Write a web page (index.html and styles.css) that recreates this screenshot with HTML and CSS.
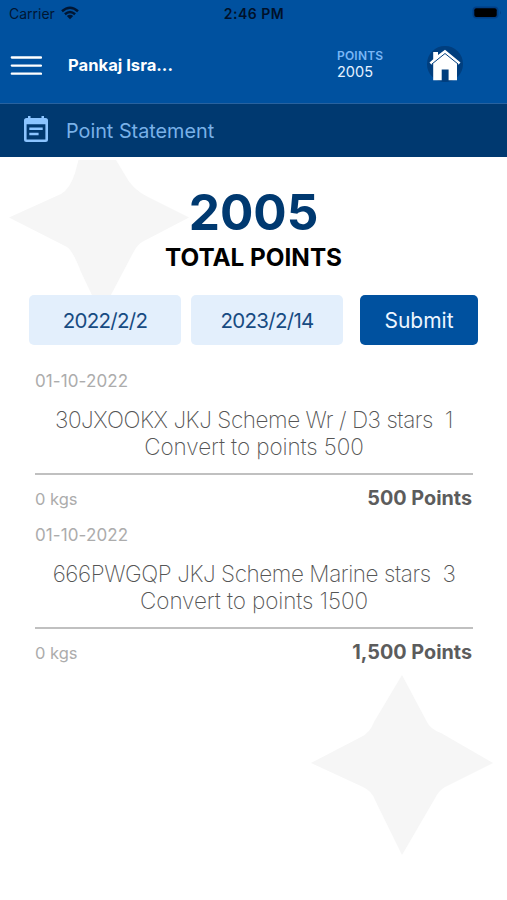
FILE: index.html
```html
<!DOCTYPE html>
<html lang="en">
<head>
<meta charset="utf-8">
<title>Point Statement</title>
<link rel="stylesheet" href="styles.css">
</head>
<body>
<div class="status-bar">
  <div class="carrier"><span>Carrier</span>
    <svg class="wifi" viewBox="0 0 18 14" width="18" height="14"><g fill="none" stroke="#001633" stroke-width="2.5"><path d="M1 5.2Q9-1.8 17 5.2"/><path d="M3.9 8.3Q9 3.8 14.1 8.3"/></g><path d="M5.8 10Q9 7.3 12.2 10L9 13.3Z" fill="#001633"/></svg>
  </div>
  <span class="clock">2:46 PM</span>
  <svg class="battery" viewBox="0 0 30 14" width="30" height="14"><rect x=".5" y=".5" width="26" height="12" rx="4" fill="#003f86"/><rect x="2.3" y="2.3" width="22.4" height="8.6" rx="2" fill="#000"/><path d="M28 4.5q1.6 2 0 4z" fill="#003f86"/></svg>
</div>
<header class="header">
  <svg class="menu" viewBox="0 0 32 20" width="32" height="20"><path d="M1.8 1.5H31M1.8 9.6H31M1.8 17.7H31" stroke="#fff" stroke-width="2.3" stroke-linecap="round"/></svg>
  <span class="user">Pankaj Isra...</span>
  <div class="balance"><span class="balance-label">POINTS</span><span class="balance-value">2005</span></div>
  <svg class="home" viewBox="0 0 38 38" width="38" height="38"><circle cx="19" cy="19" r="18" fill="#003e7e"/><path d="M7.2 7H12V10L19 4.8 34.5 17.5 32.5 19.8 31 18.6V35.2H22.6V24.5H15.7V35.2H7.2V18.6L5.5 19.8 3.5 17.5 7.2 14.2Z" fill="#fff"/><path d="M5.6 19.3 19 8.5 32.4 19.3" fill="none" stroke="#003e7e" stroke-width="1"/></svg>
</header>
<div class="title-bar">
  <svg viewBox="0 0 24 26" width="24" height="26"><path fill="#8bc4ff" fill-rule="evenodd" d="M4 0H6.5V2H17.5V0H20V2H21.5Q24 2 24 4.5V23.5Q24 26 21.5 26H2.5Q0 26 0 23.5V4.5Q0 2 2.5 2H4ZM2.6 8.3V23.4H21.4V8.3ZM5.3 11.5H18.7V14H5.3ZM5.3 16.7H14.6V19.2H5.3Z"/></svg>
  <h1>Point Statement</h1>
</div>
<main class="content">
  <svg class="star star-top" viewBox="0 0 180 150" width="180" height="150"><path d="M69.5 0H107L116 15Q123 29 139 37L180 57.5 133 82Q128 85 124 93L94 150H90L72 112Q64 91 58 87L0 57.5 52 34Q61 29 66 13Z" fill="#f6f6f6"/></svg>
  <svg class="star star-bottom" viewBox="0 0 182 180" width="182" height="180"><path d="M91 0 116 47Q119 54 130 58L182 88 134 112Q128 115 123 125L91 180 64 125Q61 116 52 112L0 88 50 62Q59 58 63 47Z" fill="#f6f6f6"/></svg>
  <section class="total"><strong>2005</strong><span>TOTAL POINTS</span></section>
  <form class="filters">
    <button type="button" class="date">2022/2/2</button>
    <button type="button" class="date">2023/2/14</button>
    <button type="button" class="submit">Submit</button>
  </form>
  <section class="entries">
    <article class="entry">
      <time>01-10-2022</time>
      <p><span class="scheme">30JXOOKX JKJ Scheme Wr / D3 stars&nbsp; 1</span><br>Convert to points 500</p>
      <footer><span>0 kgs</span><strong>500 Points</strong></footer>
    </article>
    <article class="entry">
      <time>01-10-2022</time>
      <p><span class="scheme">666PWGQP JKJ Scheme Marine stars&nbsp; 3</span><br>Convert to points 1500</p>
      <footer><span>0 kgs</span><strong>1,500 Points</strong></footer>
    </article>
  </section>
</main>
</body>
</html>
```
FILE: styles.css
```css
* { box-sizing: border-box; }
body { margin: 0; height: 900px; overflow: hidden; background: #fff; font-family: Inter, sans-serif; }
svg { display: block; flex: none; }
.status-bar { height: 28px; background: #00519f; color: #001633; display: grid; grid-template-columns: 1fr auto 1fr; align-items: center; padding: 0 5px 2px 9px; font-size: 14px; }
.carrier { display: flex; align-items: center; gap: 6px; }
.clock { font-weight: 600; color: #00112a; letter-spacing: .5px; margin-right: 3px; }
.battery { justify-self: end; }
.header { height: 76px; background: #00519f; border-bottom: 1px solid #28629f; display: flex; align-items: center; padding-left: 10px; color: #fff; }
.user { margin-left: 26px; width: 269px; font-size: 16.6px; font-weight: 700; margin-top: -1px; }
.balance { display: flex; flex-direction: column; width: 89px; line-height: 16px; margin-top: -3px; }
.balance-label { font-size: 12px; font-weight: 600; color: #79b6f6; letter-spacing: .2px; }
.balance-value { font-size: 14.5px; color: #e5f1ff; }
.home { margin-top: -3px; }
.title-bar { height: 53px; background: #003970; display: flex; align-items: center; padding-left: 24px; gap: 18px; }
.title-bar svg { margin-top: -3px; }
.title-bar h1 { margin: 0; font-size: 19.8px; font-weight: 400; color: #79b1e8; }
.content { position: relative; height: 743px; }
.star { position: absolute; z-index: -1; }
.star-top { left: 9px; top: 3px; }
.star-bottom { left: 311px; top: 518px; }
.total { display: flex; flex-direction: column; align-items: center; padding-top: 30px; }
.total strong { font-size: 49.5px; line-height: 50px; color: #003970; font-weight: 700; }
.total span { font-size: 24.3px; line-height: 28px; font-weight: 700; margin-top: 6px; color: #000; }
.filters { display: flex; padding: 0 29px; margin-top: 24px; }
.filters button { border: 0; height: 50px; border-radius: 5px; font: 400 21px Inter, sans-serif; padding: 0; }
.filters .date { width: 152px; margin-right: 10px; color: #174b82; background: #e3effc; font-size: 20.5px; letter-spacing: -.7px; }
.filters .submit { width: 118px; margin-left: 7px; background: #00519f; color: #edf6ff; }
.entries { padding: 26px 34px 0 35px; }
.entry { height: 154px; }
.entry time { display: block; font-size: 17px; line-height: 20px; color: #acacac; letter-spacing: .1px; }
.entry p { margin: 16px 0 0; font-size: 22.5px; letter-spacing: -.1px; line-height: 26.5px; font-weight: 200; color: #555; text-align: center; white-space: nowrap; height: 68px; border-bottom: 2px solid #c0c0c0; }
.entry .scheme { letter-spacing: -.43px; }
.entry footer { display: flex; justify-content: space-between; align-items: center; height: 46px; padding-right: 1px; }
.entry footer span { font-size: 16.5px; color: #acacac; padding-top: 2px; }
.entry footer strong { font-size: 19.8px; color: #5c5c5c; font-weight: 700; }
```
